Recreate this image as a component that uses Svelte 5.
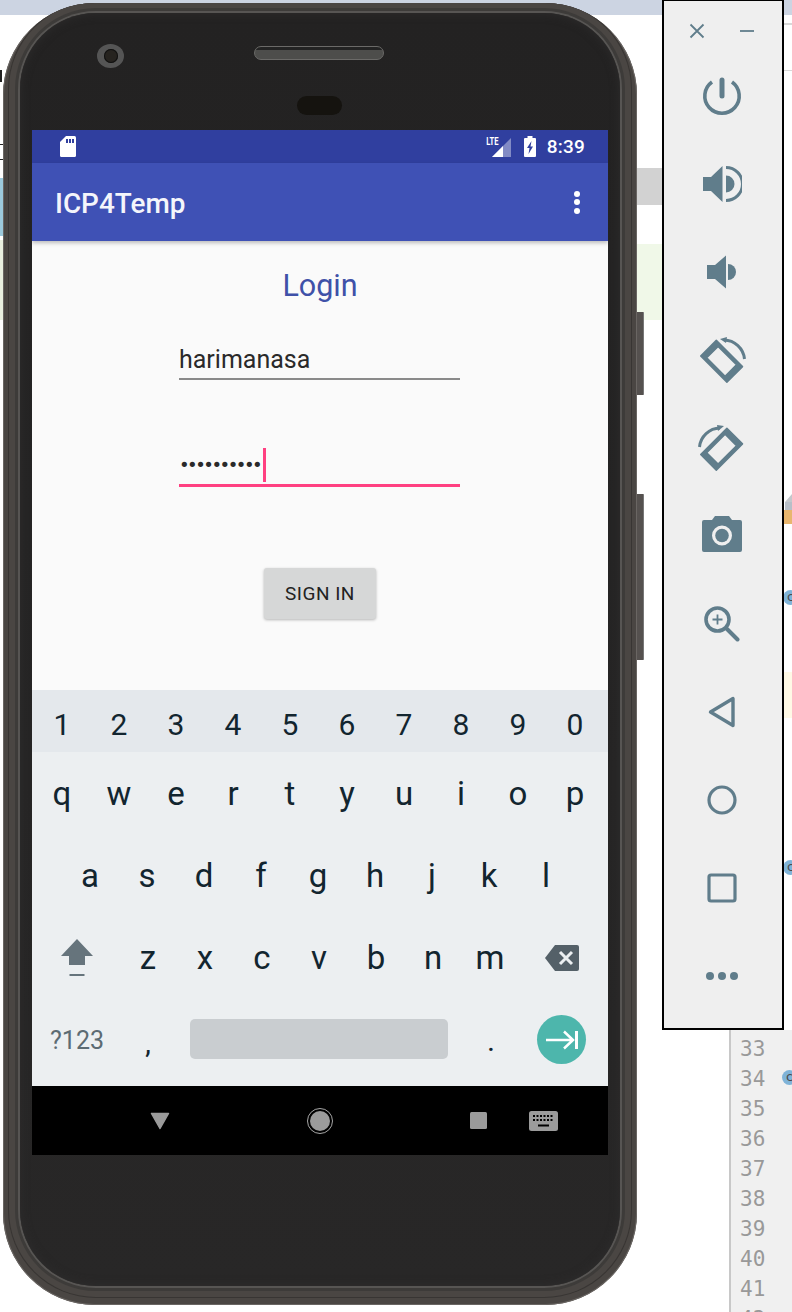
<script>
  const numbers = ['1','2','3','4','5','6','7','8','9','0'];
  const row1 = ['q','w','e','r','t','y','u','i','o','p'];
  const row2 = ['a','s','d','f','g','h','j','k','l'];
  const row3 = ['z','x','c','v','b','n','m'];
  const gutter = [33,34,35,36,37,38,39,40,41,42];
</script>

<div class="desktop">
  <div class="bg-top"></div>
  <div class="bg-line l1"></div>
  <div class="bg-line l2"></div>
  <div class="bg-gray"></div>
  <div class="bg-green"></div>
  <div class="bg-yellow"></div>
  <div class="bg-tri"></div>
  <div class="bg-band"></div>
  <div class="bg-orange"></div>
  <div class="bg-dot d1">c</div>
  <div class="bg-dot d2">c</div>
  <div class="bg-left-a"></div>
  <div class="bg-left-b"></div>
  <div class="bg-left-c"></div>
  <div class="bg-left-d"></div>

  <div class="gutter">
    {#each gutter as n}<div class="ln">{n}</div>{/each}
    <div class="bg-dot d3">c</div>
  </div>

  <div class="btn-a"></div>
  <div class="btn-b"></div>

  <div class="phone">
    <div class="bezel">
      <div class="camera"><div class="lens"></div></div>
      <div class="speaker"></div>
      <div class="sensor"></div>
      <div class="screen">
        <div class="status">
          <svg class="sd" viewBox="0 0 16 21" width="16" height="21">
            <path fill="#fff" d="M6 0H14.500A1.500 1.500 0 0 1 16 1.500V19.500A1.500 1.500 0 0 1 14.500 21H1.500A1.500 1.500 0 0 1 0 19.500V6Z"/>
            <path fill="#303f9f" d="M6 3h2v4H6zM9 3h2v4H9zM12 3h2v4h-2z"/>
          </svg>
          <div class="status-right">
            <span class="lte">LTE</span>
            <svg class="signal" viewBox="0 0 19 19" width="19" height="19">
              <path fill="#fff" fill-opacity=".4" d="M19 0V19H0Z"/>
              <path fill="#fff" d="M11 8V19H0Z"/>
            </svg>
            <svg class="battery" viewBox="0 0 12 21" width="12" height="21">
              <path fill="#fff" fill-rule="evenodd" d="M3.500 0h5v2h2.500a1 1 0 0 1 1 1v17a1 1 0 0 1-1 1H1a1 1 0 0 1-1-1V3a1 1 0 0 1 1-1h2.500ZM7.500 5 3 12h2.500L4.500 18 9 10.500H6.500Z"/>
            </svg>
            <span class="time">8:39</span>
          </div>
        </div>
        <div class="appbar">
          <span class="title">ICP4Temp</span>
          <div class="overflow"><i></i><i></i><i></i></div>
        </div>
        <div class="content">
          <div class="login">Login</div>
          <div class="field user"><span>harimanasa</span></div>
          <div class="field pass"><span class="dots">••••••••••</span><i class="caret"></i></div>
          <div class="signin">SIGN IN</div>
        </div>
        <div class="keyboard">
          <div class="numrow">
            {#each numbers as k}<span class="key num">{k}</span>{/each}
          </div>
          <div class="rows">
            <div class="row r1">{#each row1 as k}<span class="key">{k}</span>{/each}</div>
            <div class="row inset">{#each row2 as k}<span class="key">{k}</span>{/each}</div>
            <div class="row r3">
              <span class="key wide-l">
                <svg viewBox="0 0 34 38" width="34" height="38">
                  <path fill="#66747c" d="M17 0 33 17H25V26H9V17H1Z"/>
                  <path fill="#66747c" d="M9.500 35h15v2h-15z"/>
                </svg>
              </span>
              {#each row3 as k}<span class="key">{k}</span>{/each}
              <span class="key wide-r">
                <svg viewBox="0 0 34 26" width="34" height="26">
                  <path fill="#546068" d="M10 0H32a2 2 0 0 1 2 2V24a2 2 0 0 1-2 2H10L0 13Z"/>
                  <path stroke="#eceff1" stroke-width="3" d="M15 7 27 19M27 7 15 19"/>
                </svg>
              </span>
            </div>
            <div class="row bottom">
              <span class="sym">?123</span>
              <span class="comma">,</span>
              <span class="space"></span>
              <span class="period">.</span>
              <span class="enter">
                <svg viewBox="0 0 32 20" width="32" height="20">
                  <path fill="none" stroke="#fff" stroke-width="2.500" d="M0 10H27M18 1.500 27 10 18 18.500"/>
                  <path fill="none" stroke="#fff" stroke-width="3" d="M30.500 1V19"/>
                </svg>
              </span>
            </div>
          </div>
        </div>
        <div class="navbar">
          <svg class="nav-back" viewBox="0 0 20 18" width="20" height="18">
            <path fill="#9b9b9b" stroke="#9b9b9b" stroke-width="1.500" stroke-linejoin="round" d="M1.500 1.500H18.500L10 16.500Z"/>
          </svg>
          <span class="nav-home"><i></i></span>
          <span class="nav-recent"></span>
          <svg class="nav-kbd" viewBox="0 0 29 20" width="29" height="20">
            <rect width="29" height="20" rx="2.500" fill="#9b9b9b"/>
            <path fill="#000" d="M4 4h2v2H4zM7.500 4h2v2h-2zM11 4h2v2h-2zM14.500 4h2v2h-2zM18 4h2v2h-2zM21.500 4h2v2h-2zM4 8h2v2H4zM7.500 8h2v2h-2zM11 8h2v2h-2zM14.500 8h2v2h-2zM18 8h2v2h-2zM21.500 8h2v2h-2zM9 13.500h11v2H9z"/>
          </svg>
        </div>
      </div>
    </div>
  </div>

  <div class="toolbar">
    <div class="winctl">
      <svg viewBox="0 0 16 16" width="16" height="16"><path stroke="#607d8b" stroke-width="1.800" d="M1.500 1.500 14.500 14.500M14.500 1.500 1.500 14.500"/></svg>
      <svg viewBox="0 0 16 16" width="16" height="16"><path stroke="#607d8b" stroke-width="1.800" d="M1 8H15"/></svg>
    </div>
    <div class="tools">
      <div class="slot"><svg viewBox="0 0 40 40" width="40" height="40"><path fill="none" stroke="#607d8b" stroke-width="3.600" d="M10 6A17.200 17.200 0 1 0 30 6"/><path stroke="#607d8b" stroke-width="5" stroke-linecap="round" d="M20 4V20"/></svg></div>
      <div class="slot"><svg viewBox="0 0 40 40" width="40" height="40"><path fill="#607d8b" d="M1 13H9L20.500 2V38L9 27H1Z"/><path fill="#607d8b" d="M24 11.500A8.500 8.500 0 0 1 24 28.500Z"/><path fill="none" stroke="#607d8b" stroke-width="3" d="M24 3.500A16.500 16.500 0 0 1 24 36.500"/></svg></div>
      <div class="slot"><svg viewBox="0 0 40 40" width="40" height="40"><path fill="#607d8b" d="M5 13H13L24 3.500V36.500L13 27H5Z"/><path fill="#607d8b" d="M26 12A8 8 0 0 1 26 28Z"/></svg></div>
      <div class="slot"><svg viewBox="0 0 48 48" width="48" height="48"><path fill="#607d8b" stroke="#607d8b" stroke-width="1.500" stroke-linejoin="round" fill-rule="evenodd" d="M2.700 20 18.300 4.400 44.500 30.600 28.900 46.200ZM8.700 21.800 27.100 40.200 38.500 28.800 20.100 10.400Z"/><path fill="none" stroke="#607d8b" stroke-width="3" d="M26 4A21 21 0 0 1 46.500 23"/><path fill="#607d8b" d="M22 3 29 1 28 7Z"/></svg></div>
      <div class="slot"><svg viewBox="0 0 48 48" width="48" height="48"><path fill="#607d8b" stroke="#607d8b" stroke-width="1.500" stroke-linejoin="round" fill-rule="evenodd" d="M2.700 30.500 28.900 4.300 44.500 19.900 18.300 46.100ZM8.700 28.700 20.100 40.100 38.500 21.700 27.100 10.300Z"/><path fill="none" stroke="#607d8b" stroke-width="3" d="M1.500 23A21 21 0 0 1 22 4"/><path fill="#607d8b" d="M26 2 19 1 20 7Z"/></svg></div>
      <div class="slot"><svg viewBox="0 0 40 40" width="40" height="40"><path fill-rule="evenodd" fill="#607d8b" d="M13 0H27L30 4H38A2 2 0 0 1 40 6V34A2 2 0 0 1 38 36H2A2 2 0 0 1 0 34V6A2 2 0 0 1 2 4H10ZM20 9.500A10 10 0 1 0 20 29.500 10 10 0 0 0 20 9.500Z"/><circle cx="20" cy="19.500" r="6.800" fill="#607d8b"/></svg></div>
      <div class="slot"><svg viewBox="0 0 36 36" width="36" height="36"><circle cx="13.500" cy="13.500" r="11.500" fill="none" stroke="#607d8b" stroke-width="3.600"/><path stroke="#607d8b" stroke-width="1.800" d="M13.500 8.500V18.500M8.500 13.500H18.500"/><path stroke="#607d8b" stroke-width="4" stroke-linecap="round" d="M23 23 33.500 33.500"/></svg></div>
      <div class="slot"><svg viewBox="0 0 28 32" width="28" height="32"><path fill="none" stroke="#607d8b" stroke-width="3.400" stroke-linejoin="round" d="M25 2.500V29.500L2.500 16Z"/></svg></div>
      <div class="slot"><svg viewBox="0 0 30 30" width="30" height="30"><circle cx="15" cy="15" r="13" fill="none" stroke="#607d8b" stroke-width="3.200"/></svg></div>
      <div class="slot"><svg viewBox="0 0 30 30" width="30" height="30"><rect x="2" y="2" width="26" height="26" rx="2" fill="none" stroke="#607d8b" stroke-width="3.200"/></svg></div>
      <div class="slot"><svg viewBox="0 0 34 10" width="34" height="10"><circle cx="5" cy="5" r="4" fill="#607d8b"/><circle cx="17" cy="5" r="4" fill="#607d8b"/><circle cx="29" cy="5" r="4" fill="#607d8b"/></svg></div>
    </div>
  </div>
</div>

<style>
  :global(body) { margin: 0; background: #fff; }
  .desktop { position: relative; width: 792px; height: 1312px; overflow: hidden; background: #fff; font-family: Roboto, "Liberation Sans", sans-serif; }

  .bg-top { position: absolute; left: 0; top: 0; width: 792px; height: 15px; background: #ccd4e2; }
  .bg-line { position: absolute; left: 784px; width: 8px; height: 1px; background: #d8d8d8; }
  .l1 { top: 23px; height: 2px; }
  .l2 { top: 70px; }
  .bg-gray { position: absolute; left: 630px; top: 168px; width: 32px; height: 37px; background: #d2d2d2; }
  .bg-green { position: absolute; left: 630px; top: 244px; width: 32px; height: 76px; background: #f0f8e8; }
  .bg-yellow { position: absolute; left: 784px; top: 672px; width: 8px; height: 46px; background: #fff9e6; }
  .bg-tri { position: absolute; left: 785px; top: 494px; width: 0; height: 0; border-left: 7px solid transparent; border-bottom: 8px solid #c4c8cc; }
  .bg-band { position: absolute; left: 785px; top: 502px; width: 7px; height: 8px; background: #b8bfc8; }
  .bg-orange { position: absolute; left: 784px; top: 510px; width: 8px; height: 14px; background: #e8b66e; }
  .bg-dot { position: absolute; width: 15px; height: 15px; border-radius: 50%; background: #7fb3d8; color: #4a4a4a; font-size: 13px; line-height: 14px; text-align: center; font-family: "DejaVu Sans Mono", monospace; }
  .d1 { left: 783px; top: 590px; }
  .d2 { left: 783px; top: 860px; }
  .d3 { left: 51px; top: 40px; }
  .bg-left-a { position: absolute; left: 0; top: 178px; width: 3px; height: 58px; background: #9cc9dc; }
  .bg-left-b { position: absolute; left: 0; top: 70px; width: 2px; height: 12px; background: #222; }
  .bg-left-c { position: absolute; left: 0; top: 144px; width: 3px; height: 14px; border-top: 1px solid #222; border-bottom: 1px solid #222; }
  .bg-left-d { position: absolute; left: 0; top: 240px; width: 3px; height: 80px; background: #e8efdf; }

  .gutter { position: absolute; left: 729px; top: 1030px; width: 63px; height: 282px; box-sizing: border-box; background: #f0f0f0; border-left: 2px solid #c8c8c8; padding-top: 3px; font-family: "DejaVu Sans Mono", "Liberation Mono", monospace; color: #999; font-size: 21px; }
  .ln { height: 30px; line-height: 32px; padding-left: 9px; }

  .btn-a, .btn-b { position: absolute; left: 636px; width: 8px; background: #55514f; border-right: 1px solid #777; border-radius: 1px; box-sizing: border-box; }
  .btn-a { top: 312px; height: 83px; }
  .btn-b { top: 494px; height: 166px; }

  .phone { position: absolute; left: 3px; top: 3px; width: 634px; height: 1302px; box-sizing: border-box; border-radius: 92px; background: #4a4643; padding: 10px 17px 19px; overflow: hidden; box-shadow: inset 0 0 0 1px #6a6663; }
  .bezel { position: relative; height: 100%; box-sizing: border-box; border-radius: 76px; background: linear-gradient(#232222, #282727); box-shadow: inset 0 0 10px #2e2d2d, 0 0 0 2px #575553, 0 0 0 5px #3d3b39, 0 0 0 11px #4a4643, 0 0 0 12px #383533; padding: 117px 0 0 12px; }
  .camera { position: absolute; left: 77px; top: 31px; width: 27px; height: 24px; border-radius: 50%; background: #555; display: flex; align-items: center; justify-content: center; }
  .lens { width: 14px; height: 14px; border-radius: 50%; background: #26231f; box-shadow: inset 0 0 0 1px #111; }
  .speaker { position: absolute; left: 234px; top: 33px; width: 130px; height: 14px; box-sizing: border-box; border-radius: 7px; border: 1px solid #6b6a68; background: linear-gradient(#232323 0 3px, #4d4d4b 3px); }
  .sensor { position: absolute; left: 277px; top: 83px; width: 45px; height: 19px; border-radius: 10px; background: #15130f; }

  .screen { width: 576px; height: 1025px; display: flex; flex-direction: column; overflow: hidden; }
  .status { height: 33px; flex: none; background: #303f9f; display: flex; align-items: center; justify-content: space-between; padding: 0 23px 0 28px; color: #fff; }
  .sd { margin-top: -1px; }
  .status-right { display: flex; align-items: center; position: relative; }
  .lte { font-size: 11.500px; font-weight: 700; transform: scaleX(.66); transform-origin: right; margin: -9px -7px 0 0; line-height: 1; }
  .signal { margin-top: 1px; }
  .battery { margin-left: 13px; }
  .time { font-size: 19px; font-weight: 500; margin-left: 11px; letter-spacing: .2px; }
  .appbar { height: 78px; flex: none; background: #3f51b5; display: flex; align-items: center; justify-content: space-between; padding: 0 28px 0 23px; color: #fff; box-shadow: 0 2px 4px rgba(0,0,0,.25); position: relative; z-index: 1; }
  .title { font-size: 27.900px; font-weight: 500; margin-top: 2px; color: #f4f5fb; }
  .overflow { display: flex; flex-direction: column; gap: 2.500px; }
  .overflow i { width: 6px; height: 6px; border-radius: 50%; background: #fff; }

  .content { height: 449px; flex: none; background: #fafafa; position: relative; display: flex; flex-direction: column; align-items: center; }
  .login { font-size: 30.500px; color: #3f51a8; margin-top: 26px; line-height: 38px; }
  .field { width: 281px; box-sizing: border-box; display: flex; align-items: flex-end; color: #2a2a2a; position: relative; }
  .user { height: 46px; margin-top: 29px; margin-left: -1px; border-bottom: 2px solid #8a8a8a; font-size: 25px; padding-bottom: 3px; line-height: 30px; }
  .pass { height: 51px; margin-top: 56px; margin-left: -1px; border-bottom: 3px solid #ff4081; }
  .dots { font-size: 18px; letter-spacing: -2.500px; font-family: "DejaVu Sans", sans-serif; line-height: 20px; margin-bottom: 9px; }
  .caret { width: 3px; height: 34px; background: #ff4081; margin-bottom: 2px; margin-left: 3px; }
  .signin { width: 112px; height: 51px; margin-top: 81px; background: #d6d7d7; border-radius: 3px; box-shadow: 0 1px 3px rgba(0,0,0,.28); display: flex; align-items: center; justify-content: center; font-size: 19px; font-weight: 400; color: #222; letter-spacing: .5px; }

  .keyboard { height: 396px; flex: none; background: #eceff1; display: flex; flex-direction: column; }
  .numrow { height: 62px; flex: none; background: #e4e8ec; display: flex; align-items: center; padding: 8px 0 0 1.500px; box-sizing: border-box; }
  .rows { flex: 1; display: flex; flex-direction: column; }
  .row { height: 81.500px; flex: none; display: flex; align-items: center; padding-left: 1.500px; box-sizing: border-box; }
  .r1 { margin-top: 1px; }
  .r3 { margin-top: 1px; }
  .key { flex: 0 0 57px; text-align: center; font-size: 33px; color: #12252f; line-height: 1; }
  .num { font-size: 30px; }
  .row.inset { padding-left: 29.500px; }
  .wide-l { flex: 0 0 86px; display: flex; justify-content: center; }
  .wide-r { flex: 0 0 86px; display: flex; justify-content: center; }
  .row.bottom { padding-left: 0; }
  .sym { flex: 0 0 90px; text-align: center; font-size: 25px; color: #5c6b73; margin-top: 2px; }
  .comma { flex: 0 0 50px; font-size: 25px; font-weight: 500; color: #12252f; text-align: center; margin: 10px 17px 0 1px; }
  .space { width: 258px; height: 40px; border-radius: 5px; background: #c9cdd0; }
  .period { flex: 0 0 84px; text-align: center; font-size: 25px; font-weight: 500; color: #12252f; margin: 7px 0 0 1px; }
  .enter { width: 49px; height: 49px; margin: 1px 0 0 4px; border-radius: 50%; background: #4db6ac; display: flex; align-items: center; justify-content: center; }

  .navbar { height: 69px; flex: none; background: #000; position: relative; display: flex; align-items: center; }
  .nav-back { margin-left: 118px; }
  .nav-home { margin-left: 137px; width: 26px; height: 26px; box-sizing: border-box; border-radius: 50%; border: 1px solid #a6a6a6; display: flex; align-items: center; justify-content: center; }
  .nav-home i { width: 20px; height: 20px; border-radius: 50%; background: #9b9b9b; }
  .nav-recent { margin-left: 137px; width: 17px; height: 17px; border-radius: 1.500px; background: #9b9b9b; }
  .nav-kbd { margin-left: 42px; }

  .toolbar { position: absolute; left: 662px; top: 0; width: 122px; height: 1030px; box-sizing: border-box; background: #efefef; border: 2px solid #000; border-width: 1px 2px 2px 2px; display: flex; flex-direction: column; align-items: center; }
  .winctl { display: flex; gap: 34px; margin: 22px 2px 0 0; height: 16px; }
  .tools { margin: 13px 2px 0 0; display: flex; flex-direction: column; }
  .slot { height: 88px; display: flex; align-items: center; justify-content: center; }
</style>
